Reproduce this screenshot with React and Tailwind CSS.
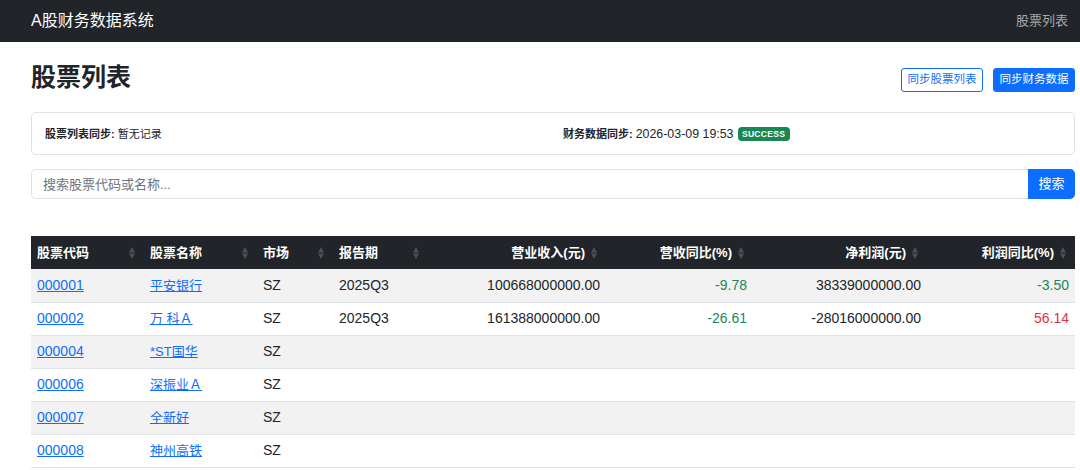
import React from "react";

const cols = [
  { key: "code", label: "股票代码", w: 113, align: "left" },
  { key: "name", label: "股票名称", w: 113, align: "left" },
  { key: "market", label: "市场", w: 76, align: "left" },
  { key: "period", label: "报告期", w: 95, align: "left" },
  { key: "rev", label: "营业收入(元)", w: 178, align: "right" },
  { key: "revyoy", label: "营收同比(%)", w: 147, align: "right" },
  { key: "np", label: "净利润(元)", w: 174, align: "right" },
  { key: "npyoy", label: "利润同比(%)", w: 148, align: "right" },
];

const rows = [
  { code: "000001", name: "平安银行", market: "SZ", period: "2025Q3", rev: "100668000000.00", revyoy: "-9.78", np: "38339000000.00", npyoy: "-3.50" },
  { code: "000002", name: "万 科Ａ", market: "SZ", period: "2025Q3", rev: "161388000000.00", revyoy: "-26.61", np: "-28016000000.00", npyoy: "56.14" },
  { code: "000004", name: "*ST国华", market: "SZ" },
  { code: "000006", name: "深振业Ａ", market: "SZ" },
  { code: "000007", name: "全新好", market: "SZ" },
  { code: "000008", name: "神州高铁", market: "SZ" },
];

function SortIcon() {
  return (
    <svg width="6" height="12" viewBox="0 0 6 12" className="shrink-0">
      <path d="M3 0 L6 5.5 L0 5.5 Z" fill="#ffffff" fillOpacity="0.2" />
      <path d="M3 12 L6 6.5 L0 6.5 Z" fill="#ffffff" fillOpacity="0.2" />
    </svg>
  );
}

function pctColor(v) {
  if (!v) return "";
  return v.startsWith("-") ? "text-[#198754]" : "text-[#dc3545]";
}

export default function App() {
  return (
    <div className="min-h-[470px] bg-white text-[#212529] font-['Liberation_Sans','Noto_Sans_CJK_SC',sans-serif]">
      <nav className="h-[42px] bg-[#212529] flex items-center justify-between pl-[31px] pr-[12px]">
        <span className="text-white text-[16px]">A股财务数据系统</span>
        <span className="text-[13px] text-[#a6a8ab]">股票列表</span>
      </nav>

      <main className="pl-[31px] pr-[5px]">
        <div className="mt-[18px] flex items-start justify-between">
          <h1 className="text-[25px] leading-[34px] font-semibold">股票列表</h1>
          <div className="mt-[8px] flex gap-[10px]">
            <button className="h-[24px] w-[82px] flex items-center justify-center text-[11.5px] rounded-[3px] border border-[#0d6efd] text-[#0d6efd] bg-white">
              同步股票列表
            </button>
            <button className="h-[24px] w-[82px] flex items-center justify-center text-[11.5px] rounded-[3px] border border-[#0d6efd] text-white bg-[#0d6efd]">
              同步财务数据
            </button>
          </div>
        </div>

        <div className="mt-[18px] h-[43px] border border-[#dee2e6] rounded-[5px] px-[3px] grid grid-cols-2 items-center text-[11px]">
          <div className="px-[10px] pt-[1px]">
            <span className="font-bold">股票列表同步:</span> 暂无记录
          </div>
          <div className="px-[10px] pt-[1px] flex items-center">
            <span className="font-bold">财务数据同步:</span>
            <span className="ml-[3px] text-[12.4px]">2026-03-09 19:53</span>
            <span className="ml-[4px] h-[14px] w-[52px] rounded-[4px] bg-[#198754] text-white text-[8.5px] font-bold flex items-center justify-center tracking-[0.3px]">
              SUCCESS
            </span>
          </div>
        </div>

        <div className="mt-[14px] flex h-[30px]">
          <input
            className="flex-1 h-full border border-[#dee2e6] border-r-0 rounded-l-[5px] px-[11px] text-[13px] placeholder:text-[#6c757d] outline-none"
            placeholder="搜索股票代码或名称..."
          />
          <button className="w-[47px] h-full bg-[#0d6efd] text-white text-[13px] rounded-r-[5px]">搜索</button>
        </div>

        <table className="mt-[37px] w-full table-fixed border-collapse">
          <colgroup>
            {cols.map((c) => (
              <col key={c.key} style={{ width: c.w }} />
            ))}
          </colgroup>
          <thead>
            <tr className="h-[33px] bg-[#212529] text-white">
              {cols.map((c) => (
                <th key={c.key} className="pl-[6px] pr-[9px] font-bold text-[13px]">
                  {c.align === "left" ? (
                    <div className="flex items-center justify-between">
                      <span>{c.label}</span>
                      <SortIcon />
                    </div>
                  ) : (
                    <div className="flex items-center justify-end gap-[6px]">
                      <span>{c.label}</span>
                      <SortIcon />
                    </div>
                  )}
                </th>
              ))}
            </tr>
          </thead>
          <tbody>
            {rows.map((r, i) => (
              <tr key={r.code} className={(i % 2 === 0 ? "bg-[#f2f2f2] " : "bg-white ") + "h-[33px] border-b border-[#dee2e6]"}>
                <td className="px-[6px] text-[14px]">
                  <a href="#" className="text-[#0d6efd] underline">{r.code}</a>
                </td>
                <td className="px-[6px] text-[13px]">
                  <a href="#" className="text-[#0d6efd] underline">{r.name}</a>
                </td>
                <td className="px-[6px] text-[14px]">{r.market}</td>
                <td className="px-[6px] text-[14px]">{r.period || ""}</td>
                <td className="px-[6px] text-[14px] text-right">{r.rev || ""}</td>
                <td className={"px-[6px] text-[14px] text-right " + pctColor(r.revyoy)}>{r.revyoy || ""}</td>
                <td className="px-[6px] text-[14px] text-right">{r.np || ""}</td>
                <td className={"px-[6px] text-[14px] text-right " + pctColor(r.npyoy)}>{r.npyoy || ""}</td>
              </tr>
            ))}
          </tbody>
        </table>
      </main>
    </div>
  );
}
